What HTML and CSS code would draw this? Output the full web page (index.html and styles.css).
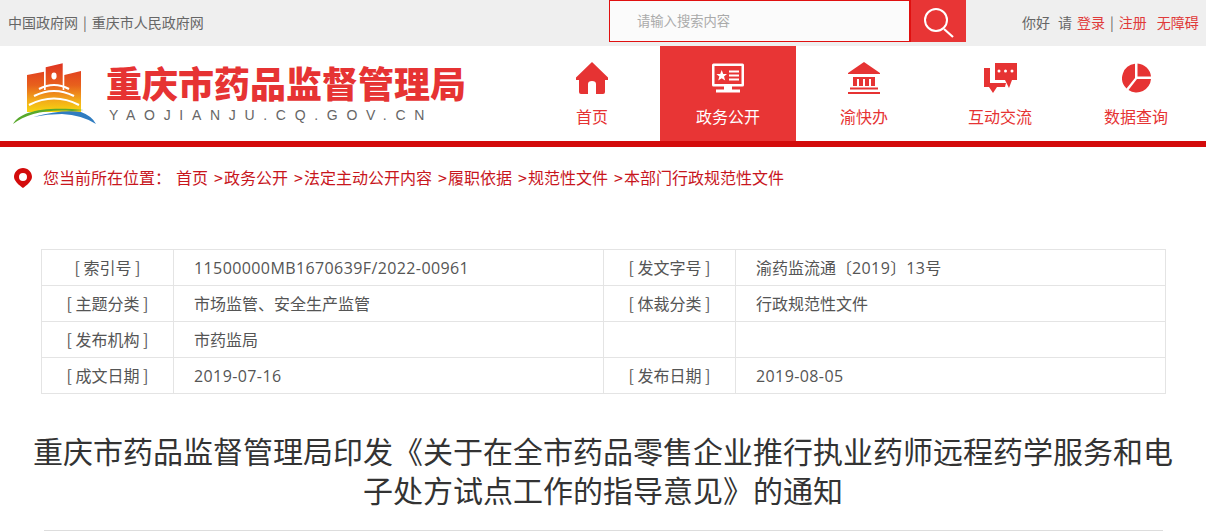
FILE: index.html
```html
<!DOCTYPE html>
<html lang="zh-CN">
<head>
    <meta charset="UTF-8">
    <title>重庆市药品监督管理局</title>
    <link rel="stylesheet" href="styles.css">
</head>
<body>

    <div class="topbar">
        <div class="top-links">
            <a>中国政府网</a><span class="bar">|</span><a>重庆市人民政府网</a>
        </div>
        <div class="search">
            <div class="search-input">请输入搜索内容</div>
            <div class="search-btn">
                <svg width="32" height="34" viewBox="0 0 32 34"><circle cx="12" cy="14" r="11" fill="none" stroke="#fff" stroke-width="2"/><path d="M20 23L29 31" stroke="#fff" stroke-width="2.200"/></svg>
            </div>
        </div>
        <div class="user-links">
            <span>你好</span><span class="qing">请</span><a>登录</a><span class="bar">|</span><a>注册</a><a class="wza">无障碍</a>
        </div>
    </div>

    <div class="header">
        <div class="logo">
            <svg class="logo-img" width="86" height="66" viewBox="0 0 86 66">
                <defs>
                    <linearGradient id="bld" x1="0" y1="0" x2="0" y2="1">
                        <stop offset="0" stop-color="#df3322"/>
                        <stop offset="0.45" stop-color="#e8601c"/>
                        <stop offset="0.75" stop-color="#f2a81a"/>
                        <stop offset="1" stop-color="#f7d60f"/>
                    </linearGradient>
                </defs>
                <path d="M15 13L32 9.700V28H33.700V5.300L50.700 1.300V28H52.300V13L69 9V50H15Z" fill="url(#bld)"/>
                <ellipse cx="42" cy="14" rx="2.600" ry="3.400" fill="#fff"/>
                <path d="M27 27Q42 19 57 27 M22 34Q42 24 62 34 M17 43Q42 30 67 43" fill="none" stroke="#fff" stroke-width="2.200"/>
                <path d="M1 62C8 50 30 44 72 48L60 49C34 47 14 52 1 62Z" fill="#58a92c"/>
                <path d="M21 55Q50 47 69 50Q80 54 84 62Q70 53 50 52Q35 52 21 55Z" fill="#2f7cc0"/>
            </svg>
            <div class="logo-text">
                <div class="site-name">重庆市药品监督管理局</div>
                <div class="site-url">YAOJIANJU.CQ.GOV.CN</div>
            </div>
        </div>
        <div class="nav">
            <a class="nav-item">
                <svg width="32" height="32" viewBox="0 0 32 32"><path d="M16 0L32 15.500V18H29V30Q29 32 27 32H20V22Q20 19 16 19Q12 19 12 22V32H5Q3 32 3 30V18H0V15.500Z" fill="currentColor"/></svg>
                <span>首页</span>
            </a>
            <a class="nav-item active">
                <svg width="32" height="29" viewBox="0 0 32 29"><path d="M1.500 0H30.500Q32 0 32 1.500V21.500Q32 23 30.500 23H1.500Q0 23 0 21.500V1.500Q0 0 1.500 0ZM2.500 2.500V20.500H29.500V2.500Z M12 23H20V26H12Z M4 26H28V29H4Z" fill="#fff" fill-rule="evenodd"/><path d="M9.700 6.500L11.200 10.400L15 10.500L12 13L13.200 17L9.700 14.700L6.200 17L7.400 13L4.400 10.500L8.200 10.400Z" fill="#fff"/><path d="M17 7H27V9H17Z M17 11H27V13H17Z M17 15H27V17H17Z" fill="#fff"/></svg>
                <span>政务公开</span>
            </a>
            <a class="nav-item">
                <svg width="32" height="32" viewBox="0 0 32 32"><path d="M16 0L32 11V12H0V11Z M5 15H27V17H5Z M5 17H9V24H5Z M11 17H15V24H11Z M17 17H21V24H17Z M23 17H27V24H23Z M2 25.500H30V27.500H2Z M0 30H32V32H0Z" fill="currentColor"/></svg>
                <span>渝快办</span>
            </a>
            <a class="nav-item">
                <svg width="33" height="30" viewBox="0 0 33 30"><path d="M11 0H33V17H28L25 25L21 17H11Z" fill="currentColor"/><circle cx="15" cy="8" r="1.500" fill="#fff"/><circle cx="21.500" cy="8" r="1.500" fill="#fff"/><circle cx="28" cy="8" r="1.500" fill="#fff"/><path d="M0 5H6V20H22L21 24H13L9 30L5 24H0Z" fill="currentColor"/></svg>
                <span>互动交流</span>
            </a>
            <a class="nav-item">
                <svg width="29" height="29" viewBox="0 0 29 29"><path d="M15.500 0A14.500 14.500 0 0 1 29 13H15.500Z M13 .2A14.500 14.500 0 0 0 4.500 25L13 14.500Z M6.500 26.500A14.500 14.500 0 0 0 29 15.500H15Z" fill="currentColor"/></svg>
                <span>数据查询</span>
            </a>
        </div>
    </div>

    <div class="crumbs">
        <svg width="18" height="20" viewBox="0 0 18 20"><path d="M9 0C4 0 0 4 0 9C0 14 9 20 9 20C9 20 18 14 18 9C18 4 14 0 9 0ZM9 5A4 4 0 1 1 9 13A4 4 0 1 1 9 5Z" fill="#d30b0b" fill-rule="evenodd"/></svg>
        <span class="here">您当前所在位置：</span>
        <a>首页</a>
        <span class="sep">&gt;</span><a>政务公开</a>
        <span class="sep">&gt;</span><a>法定主动公开内容</a>
        <span class="sep">&gt;</span><a>履职依据</a>
        <span class="sep">&gt;</span><a>规范性文件</a>
        <span class="sep">&gt;</span><a>本部门行政规范性文件</a>
    </div>

    <table class="info">
        <colgroup>
            <col class="c-label"><col class="c-value"><col class="c-label"><col class="c-value">
        </colgroup>
        <tr>
            <th>[ 索引号 ]</th><td><span class="num">11500000MB1670639F/2022-00961</span></td>
            <th>[ 发文字号 ]</th><td>渝药监流通〔<span class="num">2019</span>〕<span class="num">13</span>号</td>
        </tr>
        <tr>
            <th>[ 主题分类 ]</th><td>市场监管、安全生产监管</td>
            <th>[ 体裁分类 ]</th><td>行政规范性文件</td>
        </tr>
        <tr>
            <th>[ 发布机构 ]</th><td>市药监局</td>
            <th></th><td></td>
        </tr>
        <tr>
            <th>[ 成文日期 ]</th><td><span class="num">2019-07-16</span></td>
            <th>[ 发布日期 ]</th><td><span class="num">2019-08-05</span></td>
        </tr>
    </table>

    <h1 class="title">重庆市药品监督管理局印发《关于在全市药品零售企业推行执业药师远程药学服务和电子处方试点工作的指导意见》的通知</h1>
    <div class="rule"></div>

</body>
</html>
```

FILE: styles.css
```css
* {
    box-sizing: border-box;
}
html, body {
    height: 532px;
    overflow: hidden;
}
body {
    margin: 0;
    font-family: "Noto Sans CJK SC", "Noto Sans", sans-serif;
    font-size: 16px;
    color: #555;
    background: #fff;
}

/* top bar */
.topbar {
    height: 46px;
    background: #efefef;
    display: flex;
    align-items: flex-start;
    font-size: 14px;
    color: #666;
}
.top-links {
    width: 609px;
    padding-left: 8px;
    line-height: 45px;
    display: flex;
}
.bar {
    margin: 0 5px;
}
.search {
    display: flex;
    width: 357px;
    height: 42px;
}
.search-input {
    width: 302px;
    height: 42px;
    border: 1px solid #e01010;
    border-right-width: 2px;
    background: #fbfbfb;
    padding-left: 27px;
    line-height: 40px;
    font-size: 13.3px;
    color: #aaa;
}
.search-btn {
    width: 55px;
    height: 42px;
    background: #e83535;
    display: flex;
    padding: 6px 0 0 13px;
}
.user-links {
    margin-left: 56px;
    line-height: 45px;
    display: flex;
}
.user-links a {
    color: #e03a3a;
}
.user-links .bar {
    margin: 0 5px;
}
.qing {
    margin: 0 5px 0 8px;
}
.wza {
    margin-left: 10px;
}

/* header */
.header {
    height: 101px;
    border-bottom: 6px solid #d30b0b;
    display: flex;
    justify-content: space-between;
}
.logo {
    display: flex;
    padding: 16px 0 0 12px;
}
.logo-text {
    margin: -1px 0 0 8px;
}
.site-name {
    font-size: 36px;
    font-weight: 900;
    line-height: 42px;
    color: #e63333;
    white-space: nowrap;
}
.site-url {
    font-family: "Liberation Sans", sans-serif;
    font-size: 14px;
    line-height: 16px;
    letter-spacing: 8.7px;
    color: #666;
    margin: 4px 0 0 3px;
}
.nav {
    display: flex;
    margin-right: 2px;
}
.nav-item {
    width: 136px;
    height: 95px;
    color: #e63333;
    display: flex;
    flex-direction: column;
    align-items: center;
}
.nav-item svg {
    height: 32px;
    margin-top: 16px;
}
.nav-item span {
    margin-top: 10px;
    line-height: 24px;
}
.nav-item.active {
    background: #e83535;
    color: #fff;
}

/* breadcrumb */
.crumbs {
    height: 62px;
    padding: 0 0 2px 14px;
    display: flex;
    align-items: center;
    color: #c8161d;
    white-space: nowrap;
}
.crumbs svg {
    margin-top: 2px;
}
.crumbs .here {
    margin: 0 5px 0 11px;
}
.crumbs .sep {
    margin: 0 1px 0 6px;
    width: 9px;
}

/* info table */
.info {
    margin: 40px 0 0 41px;
    width: 1125px;
    height: 145px;
    border-collapse: collapse;
    table-layout: fixed;
}
.c-label {
    width: 132px;
}
.info th, .info td {
    border: 1px solid #e4e4e4;
    height: 36px;
    padding: 0 0 2px;
    font-weight: normal;
}
.info td {
    padding-left: 20px;
}
.num {
    font-family: "Open Sans", sans-serif;
    letter-spacing: .4px;
}

/* article title */
.title {
    margin: 37px 0 0;
    padding: 0 20px;
    font-size: 30px;
    line-height: 39px;
    font-weight: normal;
    text-align: center;
    color: #333;
}
.rule {
    margin: 21px 43px 0 44px;
    height: 1px;
    background: #ddd;
}
```
